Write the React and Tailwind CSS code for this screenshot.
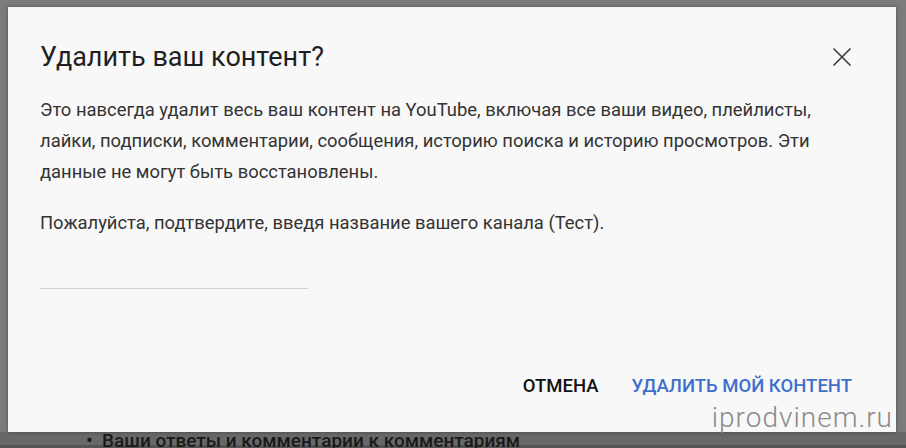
import React from 'react';

const roboto = { fontFamily: 'Roboto, "Liberation Sans", sans-serif' };

function CloseIcon() {
  return (
    <svg width="20" height="20" viewBox="0 0 20 20" fill="none" stroke="#3a3a3a" strokeWidth="1.6">
      <path d="M1.5 1.5 L18.5 18.5 M18.5 1.5 L1.5 18.5" />
    </svg>
  );
}

export default function App() {
  return (
    <div
      className="relative w-[906px] h-[448px] overflow-hidden bg-[#7c7c7c]"
      style={roboto}
    >
      {/* page underneath the modal */}
      <div className="flex flex-col h-full">
        <div className="flex-1" />
        <div className="h-[16px] bg-[#686868] border-b-[3px] border-[#555555] flex items-center pl-[86px]">
          <span className="text-[19px] leading-none font-medium text-[#1a1a1a] translate-y-[2px]">
            • &nbsp;Ваши ответы и комментарии к комментариям
          </span>
        </div>
      </div>

      {/* modal */}
      <div className="absolute left-[8px] top-[7px] w-[888px] h-[425px] bg-[#f8f8f8] shadow-[0_0_4px_rgba(0,0,0,0.35)] flex flex-col pl-[32px] pr-[44px]">
        <div className="flex items-center justify-between pt-[35px]">
          <h1 className="text-[27px] leading-[30px] text-[#1f1f1f] font-normal">Удалить ваш контент?</h1>
          <CloseIcon />
        </div>
        <div className="mt-[22px] text-[18.4px] leading-[31px] text-[#333333]">
          <p>
            Это навсегда удалит весь ваш контент на YouTube, включая все ваши видео, плейлисты,
            <br />
            лайки, подписки, комментарии, сообщения, историю поиска и историю просмотров. Эти
            <br />
            данные не могут быть восстановлены.
          </p>
          <p className="mt-[20px]">Пожалуйста, подтвердите, введя название вашего канала (Тест).</p>
        </div>
        <div className="mt-[50px] w-[268px] h-[1px] bg-[#d2d2d2]" />
        <div className="flex-1" />
        <div className="flex justify-end items-center gap-[33px] pb-[37px]">
          <span className="text-[18.5px] font-medium text-[#111111] leading-none">ОТМЕНА</span>
          <span className="text-[18.5px] font-medium text-[#3f6fcb] leading-none">УДАЛИТЬ МОЙ КОНТЕНТ</span>
        </div>
      </div>

      {/* watermark */}
      <div className="absolute right-[13px] top-[404px] whitespace-nowrap text-[28px] font-light leading-none text-[#8a8a8a] tracking-[1px]">
        iprodvinem.ru
      </div>
    </div>
  );
}
